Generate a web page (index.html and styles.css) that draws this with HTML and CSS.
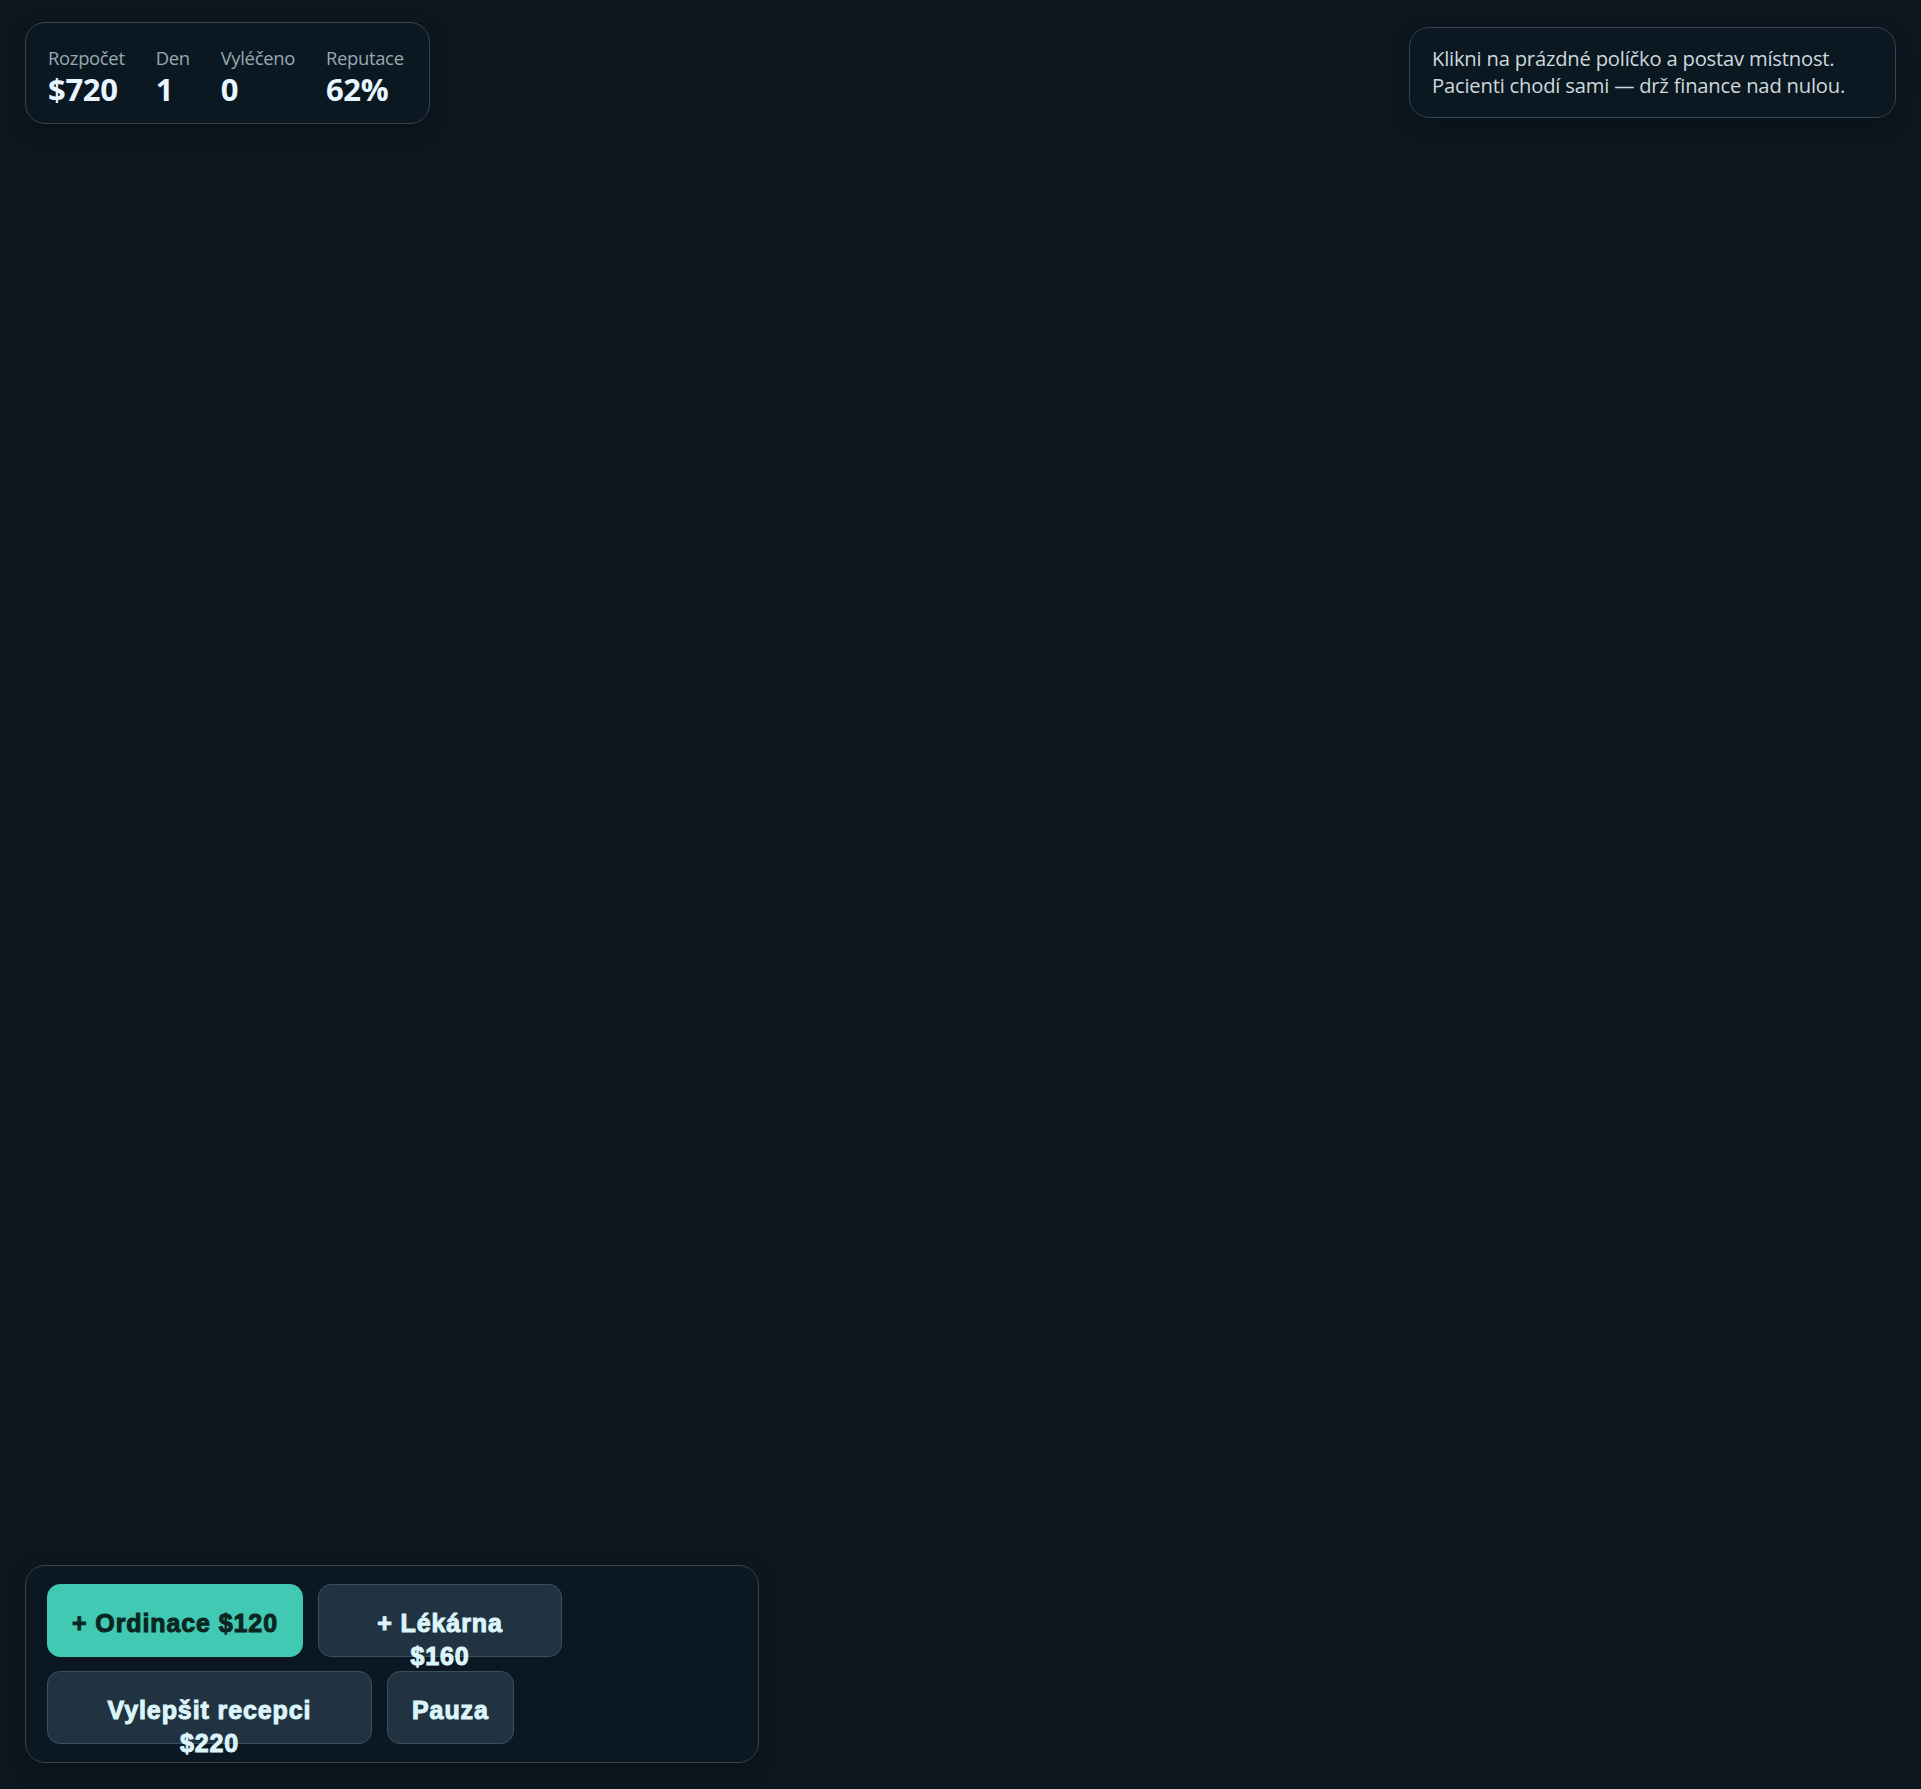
FILE: index.html
```html
<!DOCTYPE html>
<html lang="cs">
<head>
<meta charset="utf-8">
<title>Nemocnice</title>
<link rel="stylesheet" href="styles.css">
</head>
<body>
<div class="screen">
  <div class="top">
    <div class="hud">
      <div class="stat stat-budget">
        <div class="stat-label">Rozpočet</div>
        <div class="stat-value">$720</div>
      </div>
      <div class="stat stat-day">
        <div class="stat-label">Den</div>
        <div class="stat-value">1</div>
      </div>
      <div class="stat stat-cured">
        <div class="stat-label">Vyléčeno</div>
        <div class="stat-value">0</div>
      </div>
      <div class="stat stat-rep">
        <div class="stat-label">Reputace</div>
        <div class="stat-value">62%</div>
      </div>
    </div>
    <div class="hint">
      <p class="hint-line">Klikni na prázdné políčko a postav místnost.</p>
      <p class="hint-line">Pacienti chodí sami — drž finance nad nulou.</p>
    </div>
  </div>
  <div class="toolbar">
    <button class="btn btn-primary"><span class="btn-line">+ Ordinace $120</span></button>
    <button class="btn btn-pharmacy"><span class="btn-line">+ Lékárna</span><span class="btn-line">$160</span></button>
    <button class="btn btn-reception"><span class="btn-line">Vylepšit recepci</span><span class="btn-line">$220</span></button>
    <button class="btn btn-pause"><span class="btn-line">Pauza</span></button>
  </div>
</div>
</body>
</html>
```
FILE: styles.css
```css
html, body {
  margin: 0;
  padding: 0;
  background: #0d1720;
}

.screen {
  box-sizing: border-box;
  height: 1789px;
  padding: 22px 25px 26px 25px;
  display: flex;
  flex-direction: column;
  font-family: "Open Sans", "Noto Sans", sans-serif;
}

.top {
  display: flex;
  justify-content: space-between;
  align-items: flex-start;
}

.hud {
  display: flex;
  gap: 31px;
  padding: 23px 25px 14px 22px;
  border: 1.5px solid #34454f;
  border-radius: 20px;
  background: #0b1821;
  box-shadow: 0 6px 22px rgba(0, 0, 0, 0.28);
}

.stat {
  display: flex;
  flex-direction: column;
}

.stat-label {
  font-size: 18.4px;
  line-height: 24px;
  color: #9aa8b1;
  letter-spacing: -0.3px;
}

.stat-value {
  font-size: 31px;
  line-height: 39px;
  font-weight: 700;
  color: #e8f7ff;
  letter-spacing: -0.3px;
}

.hint {
  margin-top: 5px;
  padding: 17px 22px 18px 22px;
  border: 1.5px solid #34454f;
  border-radius: 20px;
  background: #0b1821;
  box-shadow: 0 6px 22px rgba(0, 0, 0, 0.28);
  width: 441px;
}

.hint-line {
  margin: 0;
  font-size: 20.2px;
  line-height: 27px;
  color: #ced8de;
  letter-spacing: -0.2px;
  white-space: nowrap;
}

.toolbar {
  margin-top: auto;
  box-sizing: border-box;
  width: 734px;
  display: flex;
  flex-wrap: wrap;
  align-content: flex-start;
  gap: 14px 15px;
  padding: 18px 21px;
  border: 1.5px solid #34454f;
  border-radius: 20px;
  background: #0b1821;
  box-shadow: 0 6px 22px rgba(0, 0, 0, 0.28);
}

.btn {
  box-sizing: border-box;
  height: 73px;
  padding: 22px 24px 0 24px;
  display: flex;
  flex-direction: column;
  align-items: center;
  justify-content: flex-start;
  border: 1.5px solid #3b505d;
  border-radius: 13px;
  background: #213340;
  color: #dcf5fb;
  font-family: "Liberation Sans", Arial, sans-serif;
  font-size: 25px;
  font-weight: 700;
  letter-spacing: 0.9px;
  line-height: 33px;
  -webkit-text-stroke: 1px currentColor;
  overflow: visible;
  cursor: pointer;
}

.btn-line {
  display: block;
  white-space: nowrap;
}

.btn-primary {
  background: #41c9b3;
  border-color: #41c9b3;
  color: #0a2522;
}

.btn-pharmacy {
  width: 244px;
}

.btn-reception {
  width: 325px;
}
```
